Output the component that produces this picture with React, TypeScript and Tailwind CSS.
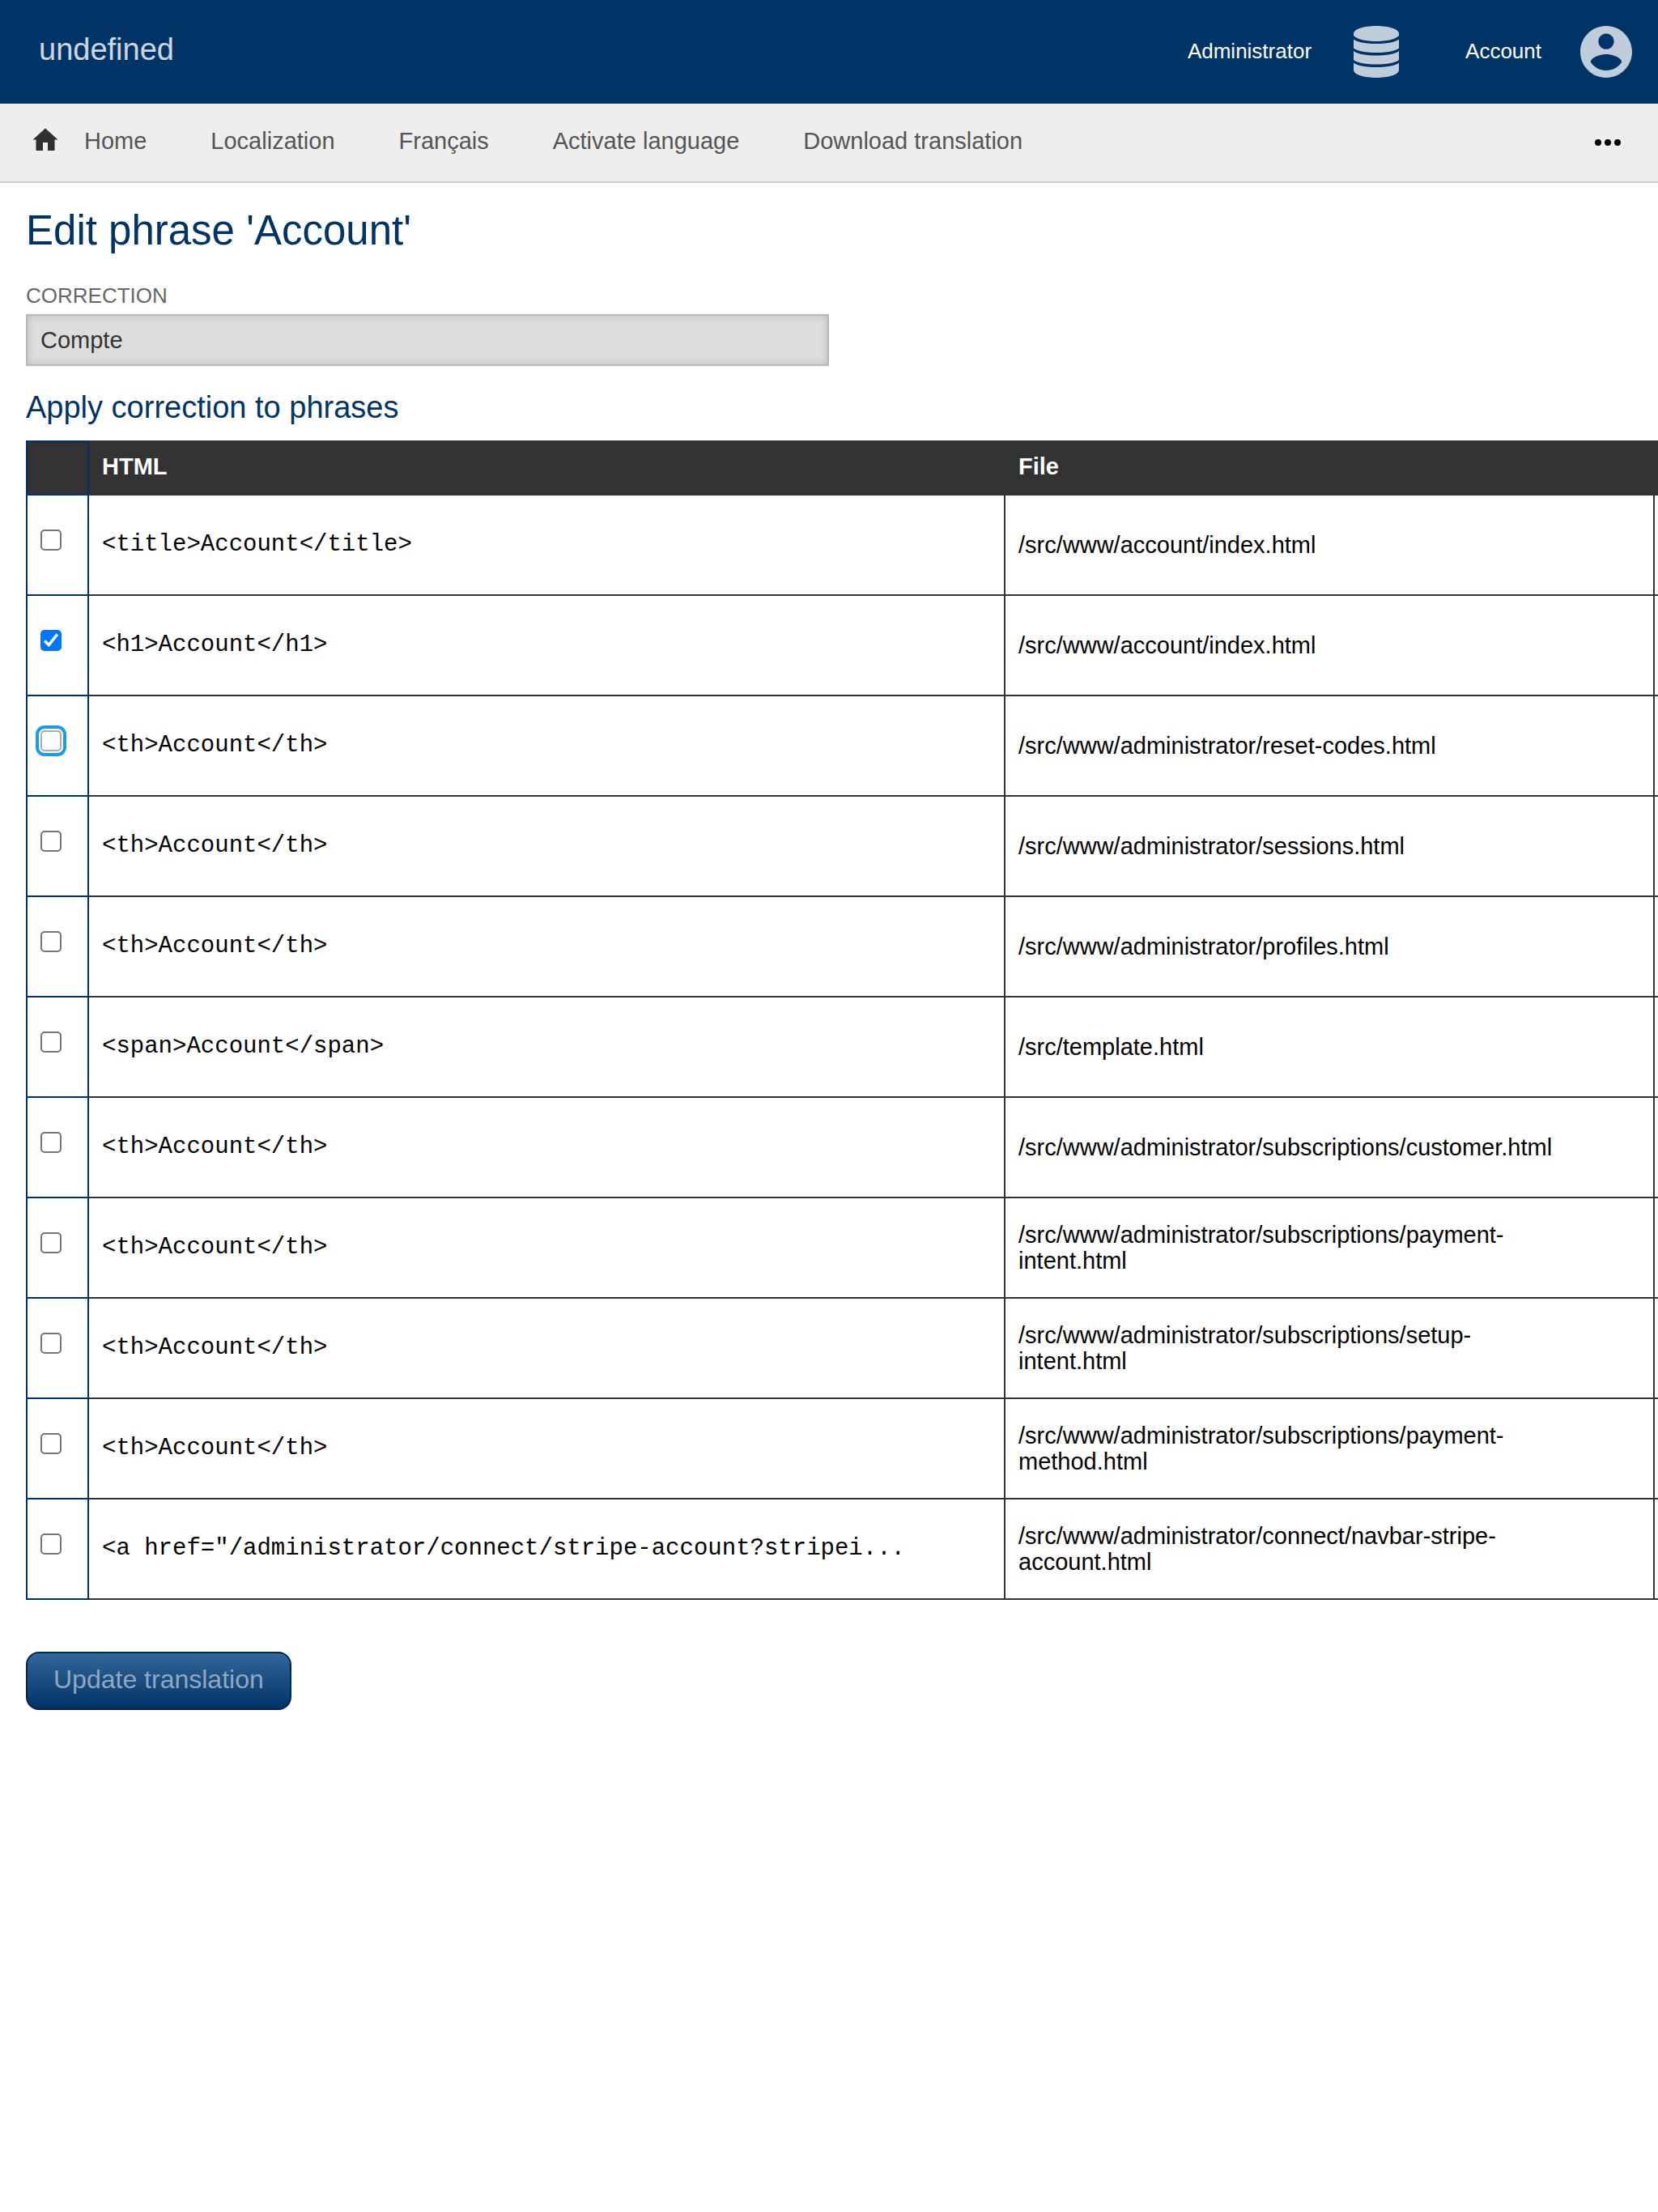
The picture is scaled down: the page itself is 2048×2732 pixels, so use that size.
import React from "react";

type Phrase = { html: string; file: string; checked?: boolean; active?: boolean };

const phrases: Phrase[] = [
  { html: "<title>Account</title>", file: "/src/www/account/index.html" },
  { html: "<h1>Account</h1>", file: "/src/www/account/index.html", checked: true },
  { html: "<th>Account</th>", file: "/src/www/administrator/reset-codes.html", active: true },
  { html: "<th>Account</th>", file: "/src/www/administrator/sessions.html" },
  { html: "<th>Account</th>", file: "/src/www/administrator/profiles.html" },
  { html: "<span>Account</span>", file: "/src/template.html" },
  { html: "<th>Account</th>", file: "/src/www/administrator/subscriptions/customer.html" },
  { html: "<th>Account</th>", file: "/src/www/administrator/subscriptions/payment-intent.html" },
  { html: "<th>Account</th>", file: "/src/www/administrator/subscriptions/setup-intent.html" },
  { html: "<th>Account</th>", file: "/src/www/administrator/subscriptions/payment-method.html" },
  {
    html: '<a href="/administrator/connect/stripe-account?stripei...',
    file: "/src/www/administrator/connect/navbar-stripe-account.html",
  },
];

const links = ["Home", "Localization", "Français", "Activate language", "Download translation"];

function DatabaseIcon() {
  return (
    <svg viewBox="0 0 56 64" className="h-16 w-14 text-[#bfccd9]" fill="currentColor" aria-hidden="true">
      <path d="M0 9.5C0 4 13 0 28 0S56 4 56 9.5V12C51 17 40 19 28 19S5 17 0 12Z" />
      <path d="M0 16.5C5 20.5 16 22 28 22S51 20.5 56 16.500V27.500C51 31.500 40 33 28 33S5 31.500 0 27.500Z" />
      <path d="M0 31C5 35 16 36.500 28 36.500S51 35 56 31V42C51 46 40 47.500 28 47.500S5 46 0 42Z" />
      <path d="M0 45.500C5 49.500 16 51 28 51S51 49.500 56 45.500V54.500C56 60 43 64 28 64S0 60 0 54.500Z" />
    </svg>
  );
}

function AccountIcon() {
  return (
    <svg viewBox="2 2 20 20" className="size-16 text-[#bfccd9]" fill="currentColor" aria-hidden="true">
      <path d="M12 2C6.480 2 2 6.480 2 12s4.480 10 10 10 10-4.480 10-10S17.520 2 12 2zm0 3c1.660 0 3 1.340 3 3s-1.340 3-3 3-3-1.340-3-3 1.340-3 3-3zm0 14.200c-2.500 0-4.710-1.280-6-3.220.030-1.990 4-3.080 6-3.080 1.990 0 5.970 1.090 6 3.080-1.290 1.940-3.500 3.220-6 3.220z" />
    </svg>
  );
}

function HomeIcon() {
  return (
    <svg viewBox="0 0 32 28" className="mb-2 h-7 w-8 text-[#303030]" fill="currentColor" aria-hidden="true">
      <path d="M16 0.500 31.500 14.500H27.500V28H19V18H13V28H4.500V14.500H0.500Z" />
    </svg>
  );
}

function Tick({ phrase }: { phrase: Phrase }) {
  return (
    <span className="grid size-[26px]">
      <input
        type="checkbox"
        defaultChecked={phrase.checked}
        aria-label={`Select ${phrase.html} in ${phrase.file}`}
        className={
          "peer col-start-1 row-start-1 size-[26px] appearance-none rounded-[5px] border-2 bg-white checked:border-[#0075ff] checked:bg-[#0075ff] " +
          (phrase.active ? "border-[#acacac] outline-4 outline-offset-2 outline-[#149eeb]" : "border-[#767676]")
        }
      />
      <svg
        viewBox="0 0 26 26"
        className="pointer-events-none invisible col-start-1 row-start-1 size-[26px] peer-checked:visible"
        fill="none"
        stroke="#fff"
        strokeWidth="3.6"
        aria-hidden="true"
      >
        <path d="M5 13.500 10.300 18.600 20.800 5.300" />
      </svg>
    </span>
  );
}

export default function App() {
  return (
    <div className="overflow-hidden bg-white font-['Liberation_Sans',Arial,sans-serif] text-[29px] leading-8 text-black">
      <header className="flex h-32 items-center justify-between bg-[#003366] pr-8 pl-12 text-white">
        <h1 className="pb-1.5 text-[38px] leading-[44px] text-white/80">
          <a href="#">undefined</a>
        </h1>
        <nav aria-label="User" className="flex items-center text-[26px] leading-8">
          <a href="#" className="flex items-center gap-[52px]">
            <span className="pb-0.5">Administrator</span>
            <DatabaseIcon />
          </a>
          <a href="#" className="ml-[82px] flex items-center gap-12">
            <span className="pb-0.5">Account</span>
            <AccountIcon />
          </a>
        </nav>
      </header>

      <nav aria-label="Breadcrumb" className="flex h-[98px] items-center border-b-2 border-[#ccc] bg-[#eee] pr-[46px] pl-10 text-[#555]">
        <HomeIcon />
        <ul className="flex flex-1 gap-[79px] pb-1 pl-8">
          {links.map((link) => (
            <li key={link}><a href="#">{link}</a></li>
          ))}
        </ul>
        <button type="button" aria-label="More" className="flex gap-1">
          <span className="size-2 rounded-full bg-black" />
          <span className="size-2 rounded-full bg-black" />
          <span className="size-2 rounded-full bg-black" />
        </button>
      </nav>

      <main className="pl-8">
        <h2 className="pt-7 text-[51px] leading-[62px] text-[#003366]">Edit phrase 'Account'</h2>
        <form onSubmit={(e) => e.preventDefault()}>
          <label htmlFor="correction" className="mt-8 block text-[26px] leading-[34px] text-[#666] uppercase">
            Correction
          </label>
          <input
            id="correction"
            type="text"
            defaultValue="Compte"
            className="mt-1.5 block h-16 w-1/2 max-w-[992px] border-2 border-[#b8b8b8] bg-[#ddd] px-4 text-[#333] shadow-[inset_0_0_10px_#bbb]"
          />
          <h3 className="mt-7 text-[38px] leading-[46px] text-[#003366]">Apply correction to phrases</h3>

          <table className="mt-[18px] w-[calc(100%+80px)] table-fixed border-collapse text-left">
            <colgroup>
              <col className="w-[76px]" />
              <col className="w-[1132px]" />
              <col className="w-[802px]" />
              <col />
            </colgroup>
            <thead>
              <tr className="h-[66px] bg-[#333] text-white">
                <th className="border-2 border-[#003366]" aria-label="Select" />
                <th className="border-2 border-[#333] px-4 pb-1 font-bold">HTML</th>
                <th className="border-2 border-[#333] px-4 pb-1 font-bold">File</th>
                <th className="border-2 border-[#333]" />
              </tr>
            </thead>
            <tbody>
              {phrases.map((phrase) => (
                <tr key={phrase.html + phrase.file} className="h-[124px]">
                  <td className="border-2 border-[#003366] px-4 pb-3">
                    <Tick phrase={phrase} />
                  </td>
                  <td className="border-2 border-[#333] px-4 font-['Liberation_Mono',monospace]">{phrase.html}</td>
                  <td className="border-2 border-[#333] pr-28 pl-4">{phrase.file}</td>
                  <td className="border-2 border-[#333]" />
                </tr>
              ))}
            </tbody>
          </table>

          <button
            type="submit"
            className="mt-16 h-[72px] rounded-2xl border-2 border-[#00264d] bg-linear-to-b from-[#336699] to-[#003366] px-8 pb-1 text-[32px] text-[#8fa8c1]"
          >
            Update translation
          </button>
        </form>
      </main>
    </div>
  );
}
